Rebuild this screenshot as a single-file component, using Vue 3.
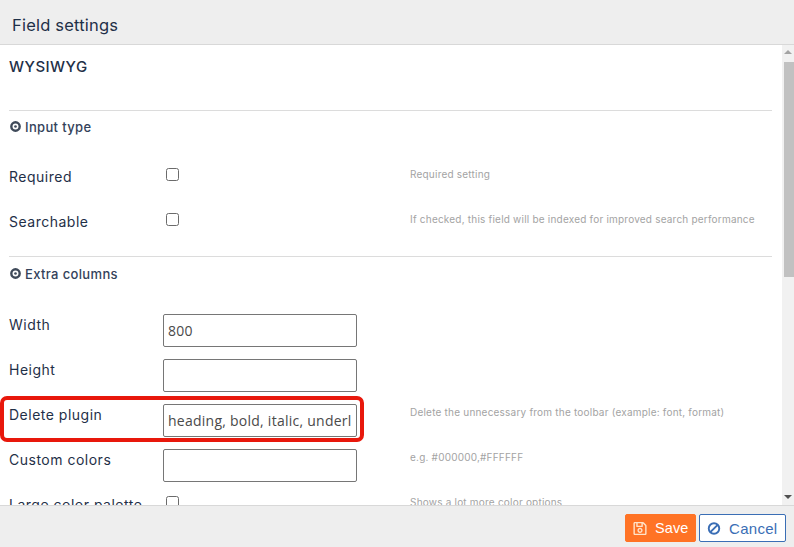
<script setup>
const firstRows = [
  { label: 'Required', help: 'Required setting' },
  { label: 'Searchable', help: 'If checked, this field will be indexed for improved search performance' },
]
const inputRows = [
  { label: 'Width', value: '800', help: '' },
  { label: 'Height', value: '', help: '' },
  { label: 'Delete plugin', value: 'heading, bold, italic, underline, strike', help: 'Delete the unnecessary from the toolbar (example: font, format)', mark: true },
  { label: 'Custom colors', value: '', help: 'e.g. #000000,#FFFFFF' },
]
</script>

<template>
  <div class="dialog">
    <header class="head">Field settings</header>
    <div class="middle">
      <main class="content">
        <h2 class="name">WYSIWYG</h2>
        <hr class="rule" />
        <h3 class="section">
          <svg class="dot" viewBox="0 0 10 10"><circle cx="5" cy="5" r="3.8" fill="none" stroke="#3f4a5a" stroke-width="2.2" /><circle cx="5" cy="5" r="1.2" fill="#3f4a5a" /></svg>
          Input type
        </h3>
        <div class="rows first">
          <div v-for="r in firstRows" :key="r.label" class="row check-row">
            <label class="label">{{ r.label }}</label>
            <div class="field"><input type="checkbox" class="check" /></div>
            <div class="help">{{ r.help }}</div>
          </div>
        </div>
        <hr class="rule second" />
        <h3 class="section lower">
          <svg class="dot" viewBox="0 0 10 10"><circle cx="5" cy="5" r="3.8" fill="none" stroke="#3f4a5a" stroke-width="2.2" /><circle cx="5" cy="5" r="1.2" fill="#3f4a5a" /></svg>
          Extra columns
        </h3>
        <div class="rows inputs">
          <div v-for="r in inputRows" :key="r.label" class="row" :class="{ marked: r.mark }">
            <label class="label">{{ r.label }}</label>
            <div class="field"><input class="text" type="text" :value="r.value" readonly /></div>
            <div class="help">{{ r.help }}</div>
            <span v-if="r.mark" class="highlight"></span>
          </div>
          <div class="row check-row">
            <label class="label">Large color palette</label>
            <div class="field"><input type="checkbox" class="check" /></div>
            <div class="help">Shows a lot more color options</div>
          </div>
        </div>
      </main>
      <aside class="scrollbar">
        <span class="arrow up"></span>
        <span class="thumb"></span>
        <span class="arrow down"></span>
      </aside>
    </div>
    <footer class="foot">
      <button class="btn save">
        <svg class="icon" viewBox="0 0 448 512"><path fill="#ffe3c9" d="M433.9 129.9l-83.9-83.9A48 48 0 0 0 316.1 32H48C21.5 32 0 53.5 0 80v352c0 26.5 21.5 48 48 48h352c26.5 0 48-21.5 48-48V163.9a48 48 0 0 0-14.1-34zM272 80v80H144V80h128zm122 352H54a6 6 0 0 1-6-6V86a6 6 0 0 1 6-6h42v104c0 13.3 10.7 24 24 24h176c13.3 0 24-10.7 24-24V83.9l78.2 78.2a6 6 0 0 1 1.8 4.2V426a6 6 0 0 1-6 6zM224 232c-48.5 0-88 39.5-88 88s39.5 88 88 88 88-39.5 88-88-39.5-88-88-88zm0 128c-22.1 0-40-17.9-40-40s17.9-40 40-40 40 17.9 40 40-17.9 40-40 40z" /></svg>
        Save
      </button>
      <button class="btn cancel">
        <svg class="icon" viewBox="0 0 16 16"><circle cx="8" cy="8" r="6" fill="none" stroke="#3a6eb5" stroke-width="2.2" /><path d="M3.8 12.2 12.2 3.8" stroke="#3a6eb5" stroke-width="2.2" /></svg>
        Cancel
      </button>
    </footer>
  </div>
</template>

<style>
html, body { margin: 0; background: #fff; overflow: hidden; }
</style>

<style scoped>
.dialog {
  width: 794px;
  height: 547px;
  display: flex;
  flex-direction: column;
  font-family: Inter, Lato, sans-serif;
  color: #1f3048;
  overflow: hidden;
}
.head {
  flex: none;
  box-sizing: border-box;
  padding: 14px 0 0 12px;
  background: #eeeeee;
  border-bottom: 1px solid #d8d8d8;
  height: 45px;
  font-size: 16.5px;
  line-height: 22px;
  letter-spacing: 0.2px;
}
.middle { flex: 1; min-height: 0; display: flex; }
.content {
  flex: 1;
  min-width: 0;
  padding: 0 10px 0 9px;
  overflow: hidden;
}
.name {
  margin: 13px 0 0;
  height: 52px;
  font-size: 15px;
  line-height: 18px;
  font-weight: 500;
  letter-spacing: 0.45px;
}
.rule { margin: 0; border: 0; border-top: 1px solid #dcdcdc; }
.section {
  margin: 7px 0 0;
  display: flex;
  align-items: center;
  gap: 4px;
  height: 17px;
  font-size: 13px;
  font-weight: 500;
  letter-spacing: 0.35px;
  color: #33425a;
}
.section.lower { margin-top: 8px; }
.dot { width: 11px; height: 11px; margin-left: 1px; }
.rows.first { margin-top: 31px; }
.rule.second { margin-top: 0; }
.rows.inputs { margin-top: 32px; }
.row {
  position: relative;
  display: grid;
  grid-template-columns: 154px 247px 1fr;
  height: 45px;
}
.label {
  padding-top: 2px;
  font-size: 14px;
  line-height: 18px;
  letter-spacing: 0.5px;
  white-space: nowrap;
}
.field { display: flex; align-items: flex-start; }
.check {
  appearance: none;
  margin: 2px 0 0 3px;
  width: 13px;
  height: 13px;
  background: #fff;
  border: 1px solid #6b6b6b;
  border-radius: 2.5px;
}
.text {
  width: 194px;
  height: 33px;
  box-sizing: border-box;
  padding: 0 4px;
  border: 1px solid #767676;
  border-radius: 2px;
  background: #fff;
  font-family: "Open Sans", sans-serif;
  font-size: 14px;
  letter-spacing: 0.25px;
  color: #4a4a4a;
  outline: none;
}
.help {
  padding-top: 1px;
  font-size: 10px;
  line-height: 14px;
  letter-spacing: 0.21px;
  color: #a3a3a3;
  white-space: nowrap;
}
.highlight {
  position: absolute;
  left: -9px;
  top: -8px;
  width: 364px;
  height: 46px;
  box-sizing: border-box;
  border: 4px solid #e8180c;
  border-radius: 7px;
  pointer-events: none;
}
.scrollbar {
  width: 12px;
  flex: none;
  background: #f1f1f1;
  display: flex;
  flex-direction: column;
  align-items: flex-end;
  position: relative;
}
.thumb { width: 10px; height: 215px; margin-top: 17px; background: #c1c1c1; }
.arrow {
  position: absolute;
  right: 2px;
  width: 0;
  height: 0;
  border-left: 4px solid transparent;
  border-right: 4px solid transparent;
}
.arrow.up { top: 5px; border-bottom: 4px solid #a3a3a3; }
.arrow.down { bottom: 6px; border-top: 4px solid #505050; }
.foot {
  height: 42px;
  flex: none;
  box-sizing: border-box;
  background: #eeeeee;
  border-top: 1px solid #d8d8d8;
  display: flex;
  justify-content: flex-end;
  align-items: flex-start;
  gap: 3px;
  padding: 8px 8px 0 0;
}
.btn {
  height: 28px;
  box-sizing: border-box;
  display: flex;
  align-items: center;
  gap: 8px;
  border-radius: 2px;
  font-family: "Liberation Sans", sans-serif;
  font-size: 15px;
  padding: 0 7px;
  border: 1px solid transparent;
}
.save { width: 71px; background: #ff7325; color: #fff; border-color: #ff7325; font-size: 14.5px; letter-spacing: 0.1px; }
.cancel { width: 87px; background: #fff; color: #3a6eb5; border-color: #3a6eb5; letter-spacing: 0.3px; }
.icon { width: 14px; height: 15px; flex: none; }
</style>
